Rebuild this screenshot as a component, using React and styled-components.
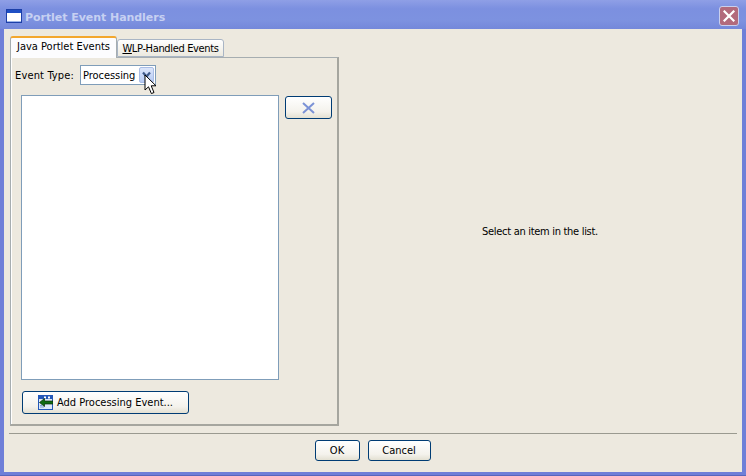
import styled, { createGlobalStyle } from "styled-components";

const GlobalStyle = createGlobalStyle`
  html, body {
    margin: 0;
    padding: 0;
    width: 746px;
    height: 476px;
    overflow: hidden;
    background: #ede9df;
    font-family: "DejaVu Sans Condensed", "DejaVu Sans", sans-serif;
    font-size: 11px;
    color: #000;
  }
  * {
    box-sizing: border-box;
  }
`;

const AppIcon = () => (
  <svg width="16" height="14" viewBox="0 0 16 14">
    <rect x="0.5" y="0.5" width="15" height="13" fill="#fff" stroke="#1c3fa8" />
    <rect x="1" y="1" width="14" height="3" fill="#1f4fc4" />
    <rect x="1" y="12" width="14" height="1" fill="#9db4e8" />
  </svg>
);

const CloseIcon = () => (
  <svg width="12" height="12" viewBox="0 0 12 12">
    <path d="M1.5 1.5L10.5 10.5M10.5 1.5L1.5 10.5" stroke="#fff" strokeWidth="2.2" strokeLinecap="square" />
  </svg>
);

const ChevronIcon = () => (
  <svg width="9" height="8" viewBox="0 0 9 8">
    <path d="M1 1.5L4.5 5.5L8 1.5" fill="none" stroke="#3f5a8a" strokeWidth="2.2" />
  </svg>
);

const DeleteIcon = () => (
  <svg width="15" height="12" viewBox="0 0 15 12">
    <path d="M2 1L13 11M13 1L2 11" stroke="#7b92d6" strokeWidth="2" />
  </svg>
);

const AddEventIcon = () => (
  <svg width="15" height="15" viewBox="0 0 15 15">
    <rect x="0.5" y="0.5" width="14" height="14" fill="#dce8f8" stroke="#2458b8" />
    <rect x="1" y="1" width="13" height="3" fill="#2458b8" />
    <rect x="10" y="1.5" width="2" height="2" fill="#fff" />
    <rect x="6" y="1.5" width="2" height="2" fill="#fff" />
    <path d="M2 12h4M2 10.5h2" stroke="#7fa0d8" />
    <path d="M1.5 7.5L6.5 3.5V6H15V9H6.5V11.5Z" fill="#0e6b12" stroke="#0a2a08" strokeWidth="0.7" />
  </svg>
);

const CursorIcon = () => (
  <svg width="14" height="22" viewBox="0 0 14 22">
    <path
      d="M1 1V16L4.5 12.8L7.4 19.6L10 18.5L7.2 11.8H12Z"
      fill="#fff"
      stroke="#000"
      strokeWidth="1"
      strokeLinejoin="miter"
    />
  </svg>
);

const App = () => {
  return (
    <>
      <GlobalStyle />
      <Window>
        <TitleBar>
          <AppIcon />
          <Title>Portlet Event Handlers</Title>
          <CloseButton>
            <CloseIcon />
          </CloseButton>
        </TitleBar>
        <Body>
          <Main>
            <LeftPane>
              <TabRow>
                <Tab $active>
                  <u>J</u>ava Portlet Events
                </Tab>
                <Tab>
                  <u>W</u>LP-Handled Events
                </Tab>
              </TabRow>
              <TabPanel>
                <TypeRow>
                  <TypeLabel>Event Type:</TypeLabel>
                  <Combo>
                    <ComboText>Processing</ComboText>
                    <ComboArrow>
                      <ChevronIcon />
                    </ComboArrow>
                    <Cursor>
                      <CursorIcon />
                    </Cursor>
                  </Combo>
                </TypeRow>
                <ListRow>
                  <EventList />
                  <DeleteButton>
                    <DeleteIcon />
                  </DeleteButton>
                </ListRow>
                <AddButton>
                  <AddEventIcon />
                  <span>Add Processing Event...</span>
                </AddButton>
              </TabPanel>
            </LeftPane>
            <DetailPane>Select an item in the list.</DetailPane>
          </Main>
          <Footer>
            <OkButton>OK</OkButton>
            <CancelButton>Cancel</CancelButton>
          </Footer>
        </Body>
      </Window>
    </>
  );
};

const Window = styled.div`
  width: 746px;
  height: 476px;
  display: flex;
  flex-direction: column;
  background: #6f7fd8;
  border-bottom: 1px solid #5866bd;
`;

const TitleBar = styled.div`
  height: 29px;
  flex: none;
  display: flex;
  align-items: center;
  padding: 3px 7px 0 6px;
  background: linear-gradient(180deg, #8f9fe6 0%, #7c90e0 30%, #7d92e0 70%, #7488da 100%);
`;

const Title = styled.div`
  margin-left: 3px;
  padding-top: 3px;
  font-family: "DejaVu Sans", sans-serif;
  font-weight: bold;
  font-size: 11px;
  letter-spacing: -0.05px;
  color: #c6d0f2;
  flex: 1;
`;

const CloseButton = styled.div`
  width: 20px;
  height: 20px;
  display: flex;
  align-items: center;
  justify-content: center;
  border: 1px solid #c9d0ee;
  border-radius: 3px;
  background: #b26a7c;
`;

const Body = styled.div`
  flex: 1;
  margin: 0 4px 3px;
  background: #ede9df;
  display: flex;
  flex-direction: column;
  padding: 7px 5px 0 6px;
  min-height: 0;
`;

const Main = styled.div`
  display: flex;
  height: 390px;
  flex: none;
`;

const LeftPane = styled.div`
  width: 329px;
  flex: none;
  display: flex;
  flex-direction: column;
`;

const TabRow = styled.div`
  display: flex;
  align-items: flex-end;
  height: 21px;
  flex: none;
`;

const Tab = styled.div`
  height: ${(p) => (p.$active ? "22px" : "18px")};
  width: 107px;
  margin-bottom: ${(p) => (p.$active ? "-1px" : "0")};
  padding-bottom: ${(p) => (p.$active ? "4px" : "0")};
  position: relative;
  z-index: ${(p) => (p.$active ? 1 : 0)};
  display: flex;
  align-items: center;
  justify-content: center;
  white-space: pre;
  border: 1px solid ${(p) => (p.$active ? "#a6adb0" : "#a9b5c5")};
  border-bottom: ${(p) => (p.$active ? "none" : "1px solid #a9b5c5")};
  border-top: ${(p) => (p.$active ? "2px solid #f3a72e" : "1px solid #a9b5c5")};
  border-radius: 3px 3px 0 0;
  background: ${(p) =>
    p.$active ? "#fcfcfe" : "linear-gradient(180deg, #ffffff 0%, #ece9df 100%)"};
  font-size: 11px;
  letter-spacing: ${(p) => (p.$active ? "0" : "-0.35px")};
`;

const TabPanel = styled.div`
  flex: 1;
  display: flex;
  flex-direction: column;
  align-items: flex-start;
  border: 1px solid #a6adb0;
  border-right: 2px solid #a6a69f;
  border-bottom: 2px solid #a6a69f;
  box-shadow: inset 1px 0 0 #fff;
  padding: 7px 6px 0 4px;
  min-height: 0;
`;

const TypeRow = styled.div`
  display: flex;
  align-items: center;
  gap: 6px;
  height: 20px;
  flex: none;
`;

const TypeLabel = styled.span`
  width: 59px;
  white-space: nowrap;
  letter-spacing: 0.15px;
`;

const Combo = styled.div`
  position: relative;
  width: 76px;
  height: 20px;
  display: flex;
  align-items: center;
  justify-content: space-between;
  background: #fff;
  border: 1px solid #7f9db9;
  padding: 1px 1px 1px 2px;
`;

const ComboText = styled.span`
  font-size: 11px;
  letter-spacing: -0.05px;
`;

const ComboArrow = styled.div`
  width: 15px;
  height: 16px;
  display: flex;
  align-items: center;
  justify-content: center;
  border: 1px solid #a9bde6;
  border-radius: 2px;
  background: linear-gradient(180deg, #dce6fb 0%, #b6caf3 100%);
`;

const Cursor = styled.div`
  position: absolute;
  left: 63px;
  top: 8px;
  z-index: 2;
  line-height: 0;
`;

const ListRow = styled.div`
  display: flex;
  align-items: flex-start;
  gap: 6px;
  margin: 10px 0 0 6px;
  flex: none;
`;

const EventList = styled.div`
  width: 258px;
  height: 285px;
  background: #fff;
  border: 1px solid #7f9db9;
`;

const XpButton = styled.div`
  display: flex;
  align-items: center;
  justify-content: center;
  border: 1px solid #003c74;
  border-radius: 3px;
  background: linear-gradient(180deg, #ffffff 0%, #f4f2ec 70%, #e3e0d2 100%);
  font-size: 11px;
`;

const DeleteButton = styled(XpButton)`
  width: 47px;
  height: 23px;
  margin-top: 1px;
`;

const AddButton = styled(XpButton)`
  width: 167px;
  height: 23px;
  gap: 4px;
  margin: 11px 0 0 7px;
  flex: none;
`;

const DetailPane = styled.div`
  flex: 1;
  display: flex;
  align-items: center;
  justify-content: center;
  padding-left: 4px;
  letter-spacing: -0.3px;
`;

const Footer = styled.div`
  margin: 7px 0 0 -1px;
  border-top: 1px solid #9a9a90;
  display: flex;
  justify-content: center;
  gap: 8px;
  padding: 6px 1px 0 0;
`;

const OkButton = styled(XpButton)`
  width: 45px;
  height: 21px;
`;

const CancelButton = styled(XpButton)`
  width: 63px;
  height: 21px;
`;

export default App;
